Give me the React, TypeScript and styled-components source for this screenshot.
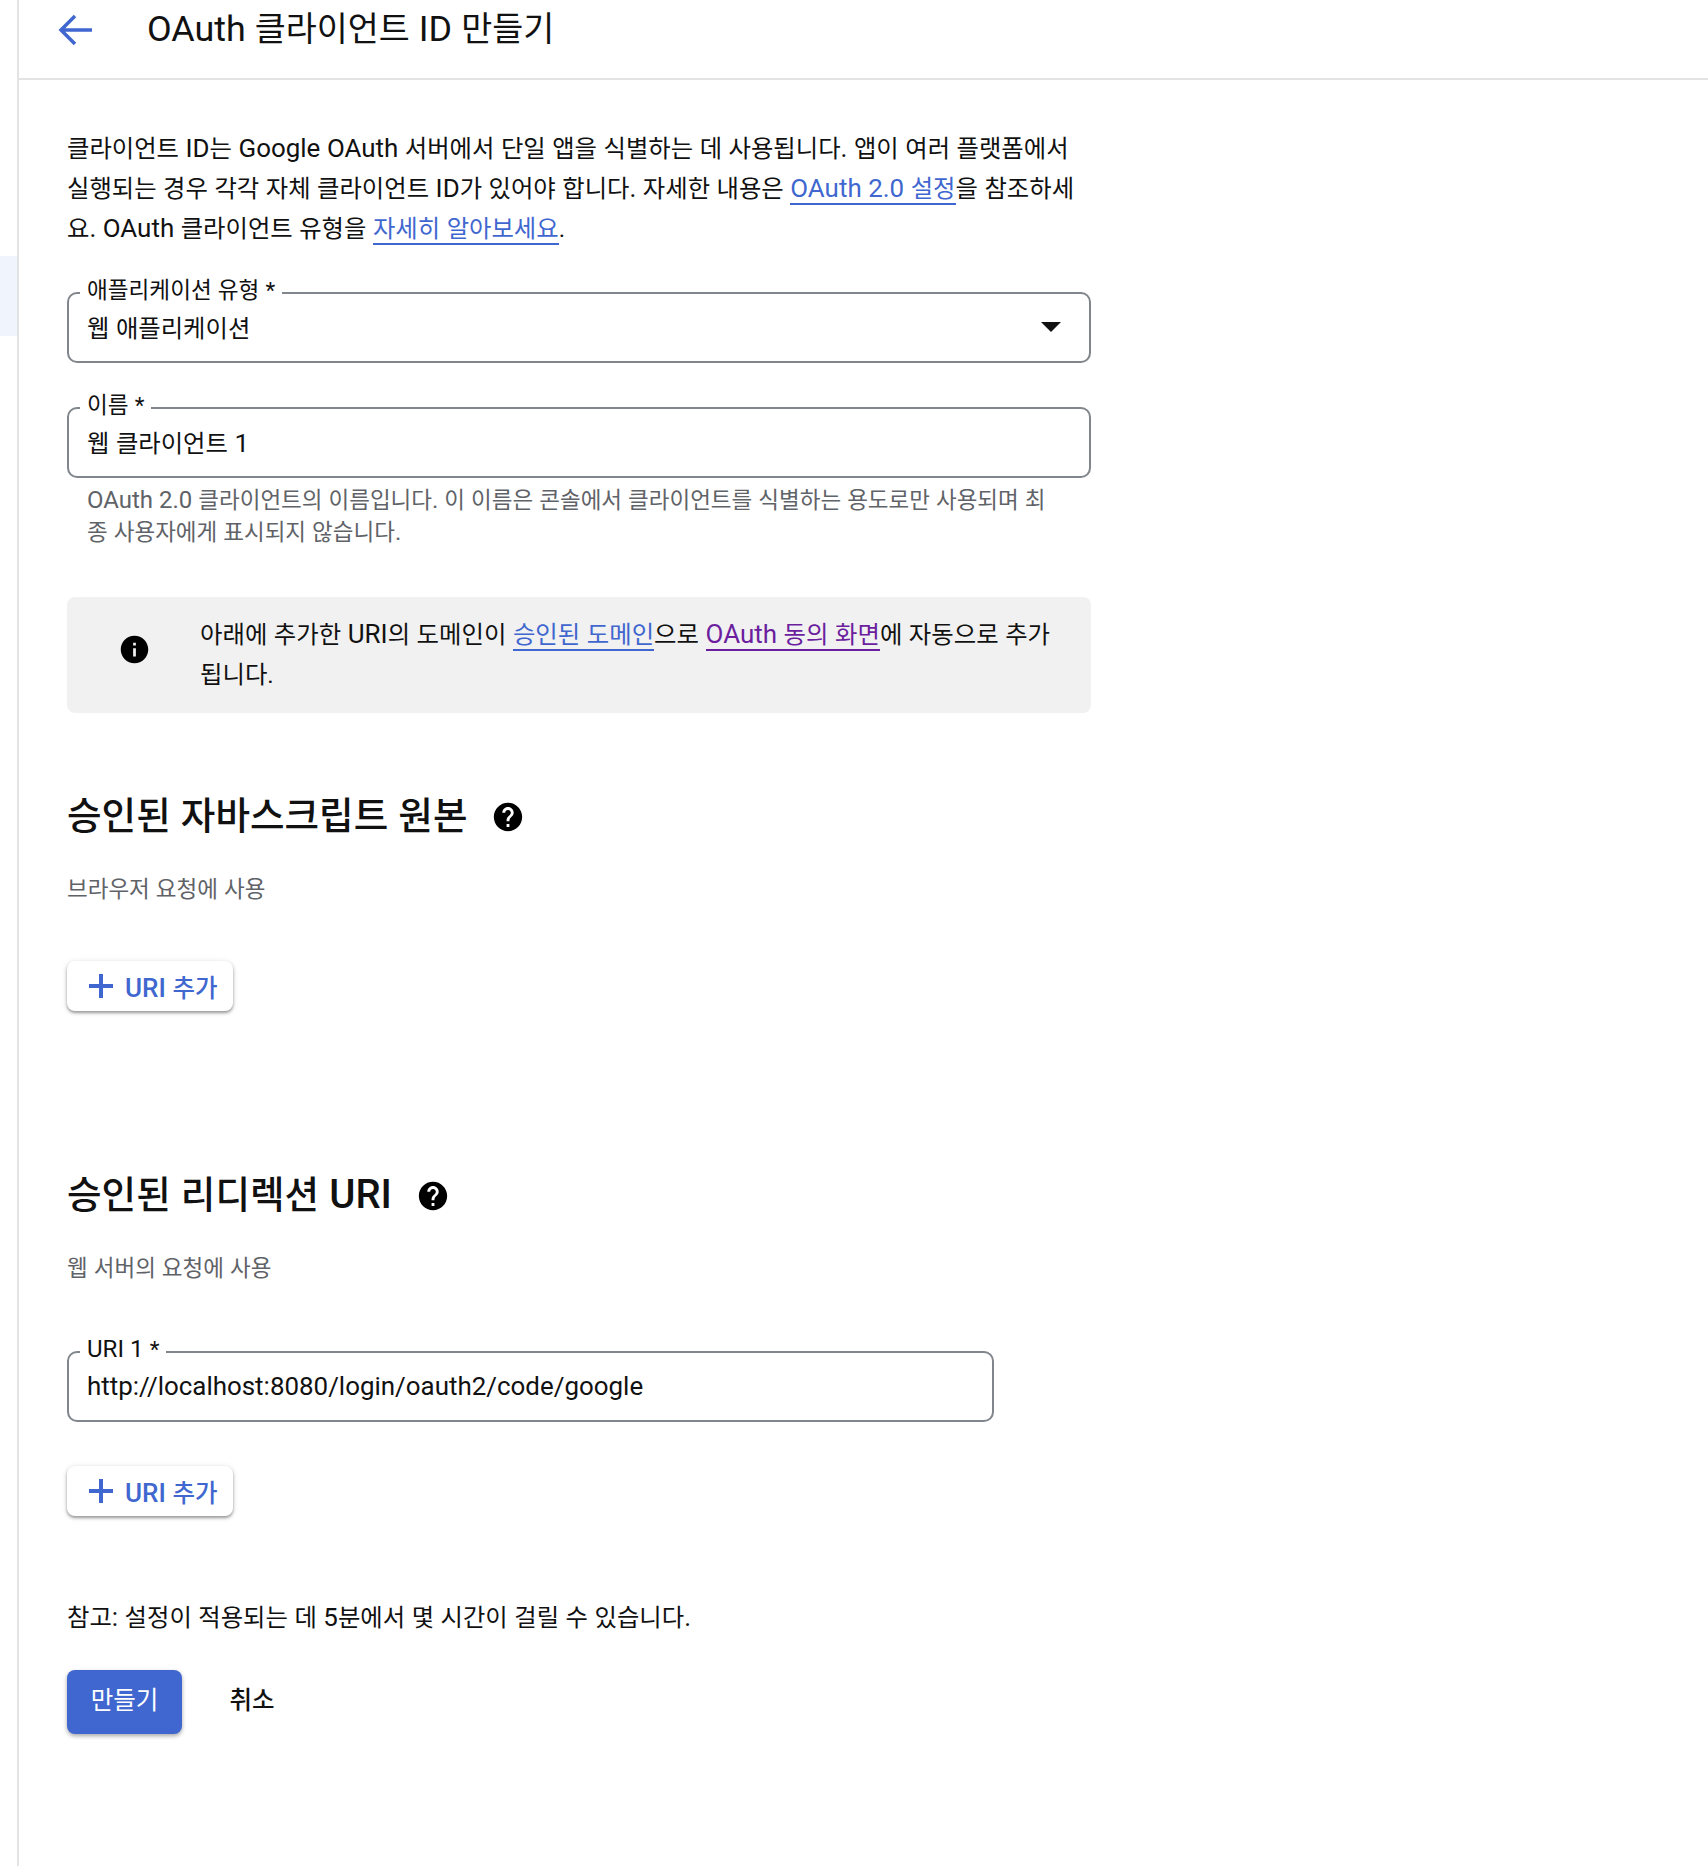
import React from 'react';
import styled, { createGlobalStyle } from 'styled-components';

const BLUE = '#3f67cf';
const FONT = `Roboto, "Noto Sans CJK KR", sans-serif`;

const GlobalStyle = createGlobalStyle`
  html, body {
    margin: 0;
    padding: 0;
    background: #fff;
    color: #1a1a1a;
    font-family: ${FONT};
  }
  * {
    box-sizing: border-box;
  }
`;

const Page = styled.div`
  display: flex;
  width: 1708px;
  height: 1866px;
  overflow: hidden;
`;

const Rail = styled.div`
  width: 19px;
  flex: none;
  border-right: 2px solid #e3e3e3;
  padding-top: 256px;
`;

const RailActive = styled.div`
  height: 80px;
  background: #eff4fd;
`;

const Main = styled.div`
  flex: 1;
  display: flex;
  flex-direction: column;
`;

const Header = styled.div`
  height: 80px;
  flex: none;
  display: flex;
  align-items: flex-start;
  border-bottom: 2px solid #e3e3e3;
  padding-left: 37px;
`;

const BackButton = styled.div`
  width: 38px;
  height: 38px;
  margin-top: 11px;
  flex: none;
`;

const Title = styled.h1`
  margin: 1px 0 0 53px;
  font-size: 33.7px;
  line-height: 58px;
  font-weight: 400;
  word-spacing: 0.02em;
  color: #111;
`;

// latin runs sit a little larger than the hangul around them
const Latin = styled.span`
  font-size: 1.065em;
  line-height: 1;
`;

const UrlValue = styled(Latin)`
  margin-top: 3px;
`;

const Content = styled.div`
  width: 1072px;
  padding: 49px 0 0 48px;
  display: flex;
  flex-direction: column;
`;

const Paragraph = styled.p`
  margin: 0;
  font-size: 24.35px;
  line-height: 40px;
  word-spacing: 0.02em;
  color: #111;
`;

const Link = styled.a<{ $visited?: boolean }>`
  color: ${(p) => (p.$visited ? '#6b1e9e' : BLUE)};
  border-bottom: 2px solid ${(p) => (p.$visited ? '#6b1e9e' : BLUE)};
  text-decoration: none;
`;

const Field = styled.div<{ $top: number; $width?: number }>`
  position: relative;
  margin-top: ${(p) => p.$top}px;
  width: ${(p) => p.$width ?? 1024}px;
  height: 71px;
  border: 2px solid #80868b;
  border-radius: 10px;
  padding: 0 18px 3px;
  display: flex;
  align-items: center;
  justify-content: space-between;
  font-size: 24.35px;
  word-spacing: 0.02em;
  color: #111;
`;

const FieldLabel = styled.label`
  position: absolute;
  left: 11px;
  top: -16px;
  padding: 0 7px;
  background: #fff;
  font-size: 22.6px;
  line-height: 26px;
  color: #111;
`;

const Caret = styled.div`
  width: 0;
  height: 0;
  margin: 2px 10px 0 0;
  border-left: 10px solid transparent;
  border-right: 10px solid transparent;
  border-top: 10px solid #111;
`;

const Hint = styled.div`
  margin-top: 6px;
  padding: 0 38px 0 20px;
  font-size: 22.5px;
  line-height: 32px;
  word-spacing: 0.02em;
  color: #5f6368;
`;

const Notice = styled.div`
  margin-top: 49px;
  width: 1024px;
  height: 116px;
  display: flex;
  background: #f1f1f1;
  border-radius: 8px;
  padding: 18px 30px 0 51px;
`;

const NoticeIcon = styled.svg`
  width: 33px;
  height: 33px;
  margin-top: 18px;
  flex: none;
`;

const NoticeText = styled.div`
  margin-left: 49px;
  font-size: 24.4px;
  line-height: 40px;
  word-spacing: 0.02em;
  color: #111;
`;

const SectionTitle = styled.h2<{ $top: number }>`
  display: flex;
  align-items: center;
  margin: ${(p) => p.$top}px 0 0;
  font-size: 37.6px;
  line-height: 56px;
  font-weight: 500;
  word-spacing: 0.02em;
  color: #111;
`;

const HelpIcon = styled.svg`
  width: 34px;
  height: 34px;
  margin-left: 24px;
  margin-top: 2px;
`;

const SubText = styled.div`
  margin-top: 30px;
  font-size: 22.5px;
  line-height: 30px;
  word-spacing: 0.02em;
  color: #5f6368;
`;

const AddButton = styled.button<{ $top: number }>`
  margin-top: ${(p) => p.$top}px;
  width: 166px;
  height: 50px;
  display: flex;
  align-items: center;
  gap: 12px;
  padding: 0 0 0 22px;
  border: none;
  border-radius: 8px;
  background: #fff;
  color: ${BLUE};
  font-family: ${FONT};
  font-size: 24.5px;
  font-weight: 500;
  word-spacing: 0.02em;
  box-shadow: 0 2px 3px rgba(0, 0, 0, 0.35), 0 1px 6px rgba(0, 0, 0, 0.12);
`;

const Note = styled.div`
  margin-top: 82px;
  font-size: 24.35px;
  line-height: 40px;
  word-spacing: 0.02em;
  color: #111;
`;

const Actions = styled.div`
  margin-top: 32px;
  display: flex;
  align-items: center;
`;

const PrimaryButton = styled.button`
  width: 115px;
  height: 64px;
  padding: 0 0 7px;
  border: none;
  border-radius: 8px;
  background: ${BLUE};
  color: #fff;
  font-family: ${FONT};
  font-size: 24.5px;
  box-shadow: 0 2px 4px rgba(0, 0, 0, 0.35);
`;

const TextButton = styled.button`
  margin-left: 32px;
  width: 76px;
  height: 64px;
  padding: 0 0 7px;
  border: none;
  background: none;
  color: #111;
  font-family: ${FONT};
  font-size: 24.5px;
  font-weight: 500;
`;

const Mixed = ({ text }: { text: string }) => (
  <>
    {text.split(/([A-Za-z0-9:/.]+)/).map((part, i) =>
      i % 2 === 1 ? <Latin key={i}>{part}</Latin> : part,
    )}
  </>
);

const Help = () => (
  <HelpIcon viewBox="0 0 24 24">
    <path
      fill="#000"
      d="M12 2C6.48 2 2 6.48 2 12s4.48 10 10 10 10-4.48 10-10S17.52 2 12 2zm1 17h-2v-2h2v2zm2.07-7.75l-.9.92C13.45 12.9 13 13.5 13 15h-2v-.5c0-1.1.45-2.1 1.17-2.83l1.24-1.26c.37-.36.59-.86.59-1.41 0-1.1-.9-2-2-2s-2 .9-2 2H8c0-2.21 1.79-4 4-4s4 1.79 4 4c0 .88-.36 1.68-.93 2.25z"
    />
  </HelpIcon>
);

const Plus = () => (
  <svg width="24" height="24" viewBox="0 0 24 24">
    <path fill={BLUE} d="M10 0h4v10h10v4H14v10h-4V14H0v-4h10z" />
  </svg>
);

const App = () => {
  return (
    <Page>
      <GlobalStyle />
      <Rail>
        <RailActive />
      </Rail>
      <Main>
        <Header>
          <BackButton>
            <svg width="38" height="38" viewBox="0 0 38 38" fill="none">
              <path d="M36 19H5M19 5L5 19l14 14" stroke={BLUE} strokeWidth="3.5" />
            </svg>
          </BackButton>
          <Title>
            <Mixed text="OAuth 클라이언트 ID 만들기" />
          </Title>
        </Header>
        <Content>
          <Paragraph>
            <Mixed text="클라이언트 ID는 Google OAuth 서버에서 단일 앱을 식별하는 데 사용됩니다. 앱이 여러 플랫폼에서 실행되는 경우 각각 자체 클라이언트 ID가 있어야 합니다. 자세한 내용은 " />
            <Link>
              <Mixed text="OAuth 2.0 설정" />
            </Link>
            <Mixed text="을 참조하세요. OAuth 클라이언트 유형을 " />
            <Link>자세히 알아보세요</Link>.
          </Paragraph>
          <Field $top={43}>
            <FieldLabel>애플리케이션 유형 *</FieldLabel>
            웹 애플리케이션
            <Caret />
          </Field>
          <Field $top={44}>
            <FieldLabel>이름 *</FieldLabel>
            <span>
              <Mixed text="웹 클라이언트 1" />
            </span>
          </Field>
          <Hint>
            <Mixed text="OAuth 2.0 클라이언트의 이름입니다. 이 이름은 콘솔에서 클라이언트를 식별하는 용도로만 사용되며 최종 사용자에게 표시되지 않습니다." />
          </Hint>
          <Notice>
            <NoticeIcon viewBox="0 0 24 24">
              <path
                fill="#000"
                d="M12 2C6.48 2 2 6.48 2 12s4.48 10 10 10 10-4.48 10-10S17.52 2 12 2zm1 15h-2v-6h2v6zm0-8h-2V7h2v2z"
              />
            </NoticeIcon>
            <NoticeText>
              <Mixed text="아래에 추가한 URI의 도메인이 " />
              <Link>승인된 도메인</Link>으로{' '}
              <Link $visited>
                <Mixed text="OAuth 동의 화면" />
              </Link>
              에 자동으로 추가됩니다.
            </NoticeText>
          </Notice>
          <SectionTitle $top={75}>
            승인된 자바스크립트 원본
            <Help />
          </SectionTitle>
          <SubText>브라우저 요청에 사용</SubText>
          <AddButton $top={57}>
            <Plus />
            <span>
              <Mixed text="URI 추가" />
            </span>
          </AddButton>
          <SectionTitle $top={156}>
            <span>
              <Mixed text="승인된 리디렉션 URI" />
            </span>
            <Help />
          </SectionTitle>
          <SubText>웹 서버의 요청에 사용</SubText>
          <Field $top={68} $width={927}>
            <FieldLabel>
              <Mixed text="URI 1 *" />
            </FieldLabel>
            <UrlValue>http://localhost:8080/login/oauth2/code/google</UrlValue>
          </Field>
          <AddButton $top={44}>
            <Plus />
            <span>
              <Mixed text="URI 추가" />
            </span>
          </AddButton>
          <Note>
            <Mixed text="참고: 설정이 적용되는 데 5분에서 몇 시간이 걸릴 수 있습니다." />
          </Note>
          <Actions>
            <PrimaryButton>만들기</PrimaryButton>
            <TextButton>취소</TextButton>
          </Actions>
        </Content>
      </Main>
    </Page>
  );
};

export default App;
